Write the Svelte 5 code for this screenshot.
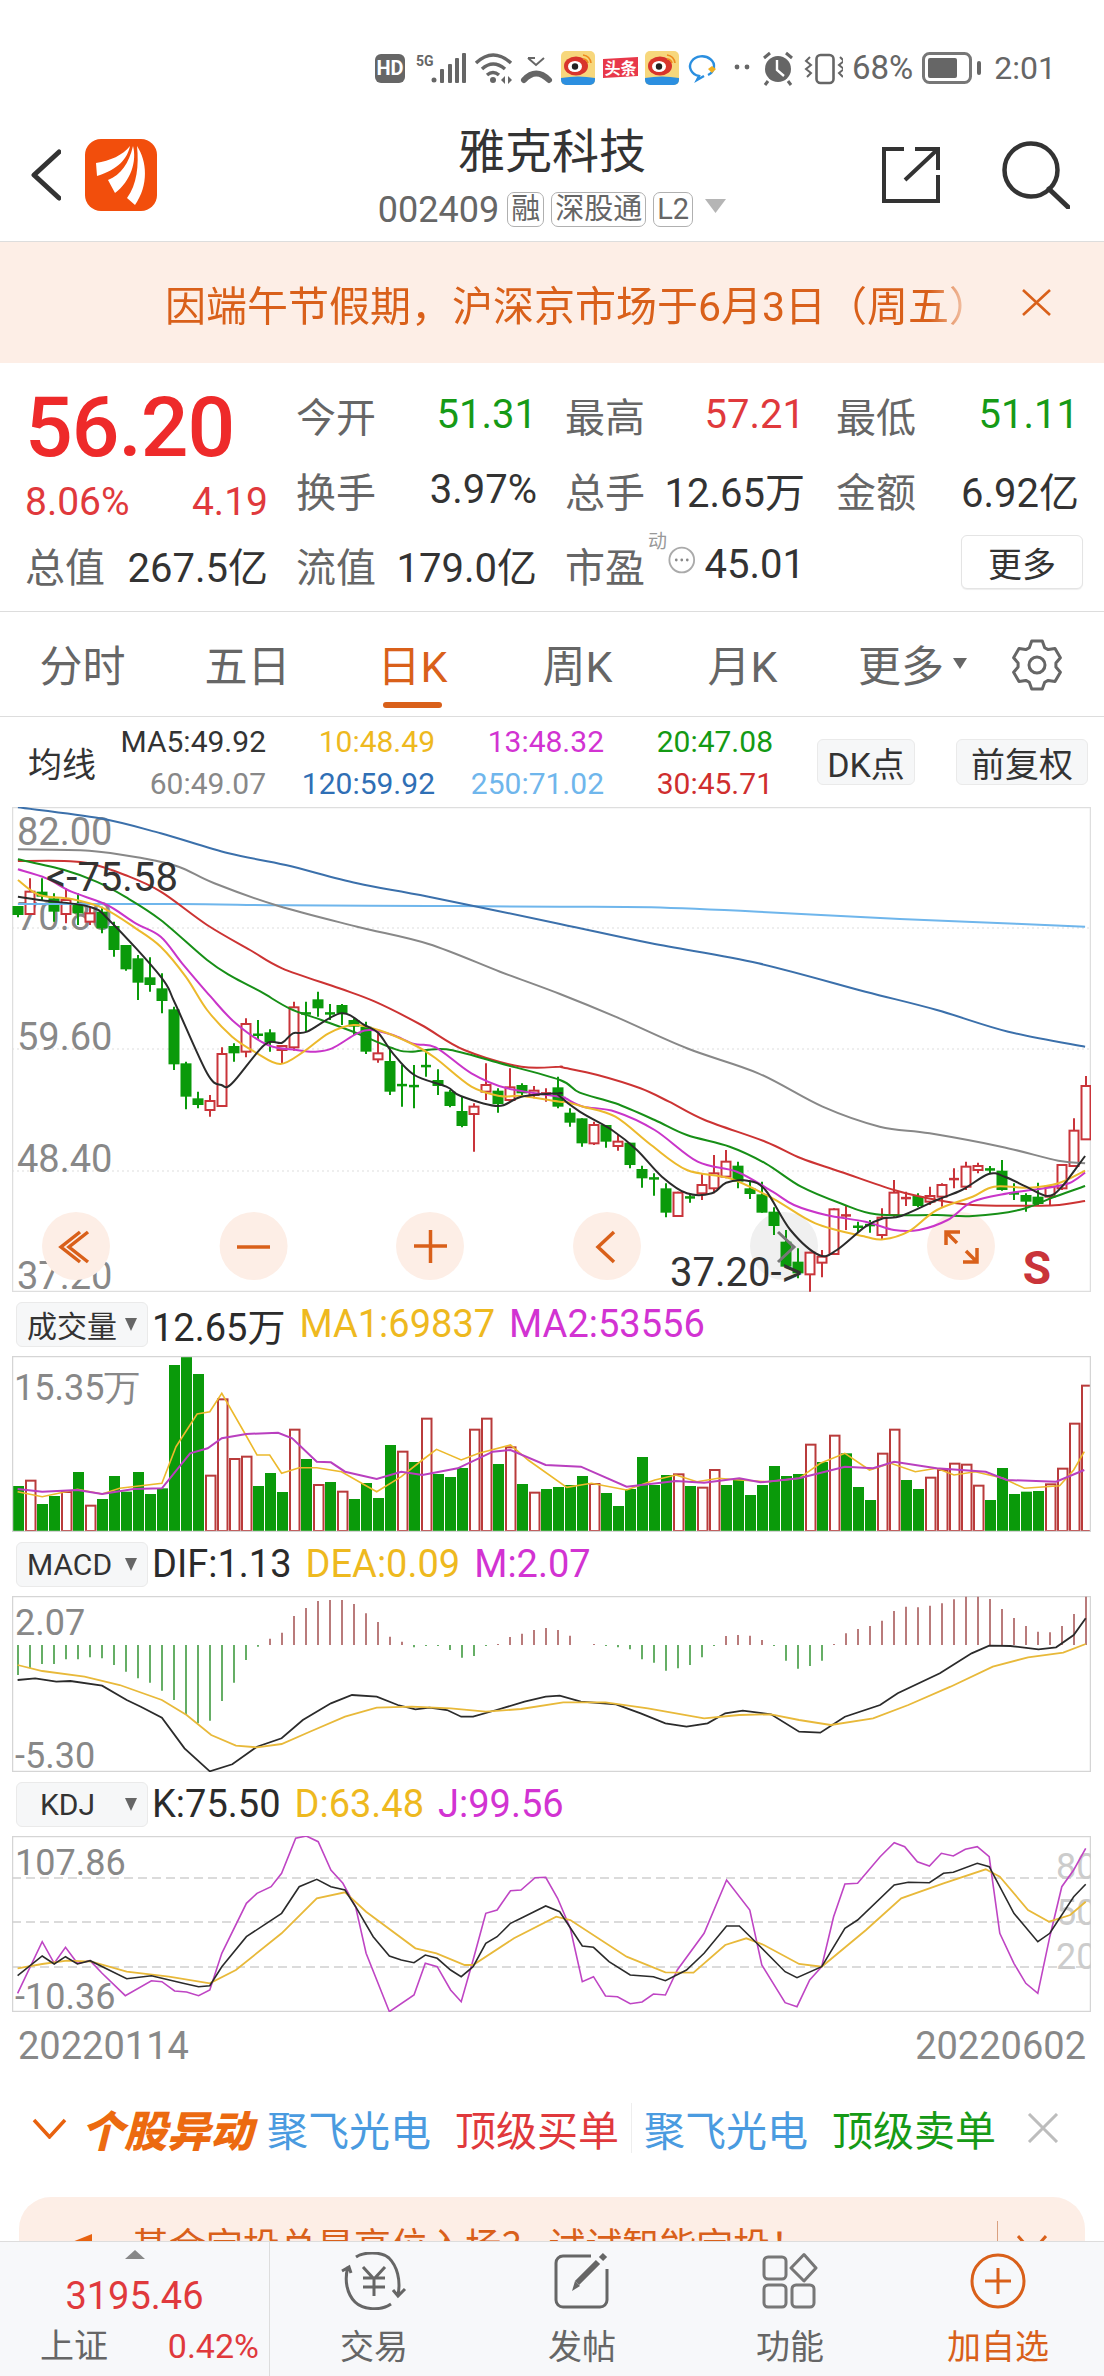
<script>
	// readings are in crop coordinates: candle data and MAs come from two 2.8x crops, the lower panes from 1.42x crops
	const RX = 1568 / 1104;
	const left = ([x, y]) => [x / 2.8, 800 + y / 3];
	const right = ([x, y]) => [544 + x / 2.8, 800 + y / 3];
	const main = (a, b) => [...a.map(left), ...b.map(right)];
	const pane = (top, a) => a.map(([x, y]) => [x / RX, top + y / 3]);

	const f = (n) => n.toFixed(1);
	const line = (p) => p.map(([x, y]) => `${f(x)},${f(y)}`).join(" ");
	const smooth = (p) => {
		let d = `M${f(p[0][0])} ${f(p[0][1])}`;
		for (let i = 0; i < p.length - 1; i++) {
			const a = p[i - 1] || p[i];
			const b = p[i];
			const c = p[i + 1];
			const e = p[i + 2] || c;
			d += ` C${f(b[0] + (c[0] - a[0]) / 6)} ${f(b[1] + (c[1] - a[1]) / 6)} ${f(c[0] - (e[0] - b[0]) / 6)} ${f(c[1] - (e[1] - b[1]) / 6)} ${f(c[0])} ${f(c[1])}`;
		}
		return d;
	};

	const gear = (() => {
		const pts = [];
		for (let i = 0; i < 6; i++) {
			const a = (i * Math.PI) / 3 - Math.PI / 2;
			for (const [r, o] of [[19, -0.42], [24.5, -0.22], [24.5, 0.22], [19, 0.42]]) {
				pts.push(`${f(26 + r * Math.cos(a + o))},${f(26 + r * Math.sin(a + o))}`);
			}
		}
		return pts.join(" ");
	})();

	// bodyTop, bodyBottom, high, low, up
	const candles = [
		[318, 345, 318, 352, 0], [275, 342, 235, 345, 1], [275, 290, 235, 300, 0], [295, 335, 280, 365, 0],
		[300, 342, 265, 370, 1], [315, 340, 280, 375, 0], [340, 365, 320, 375, 1], [335, 385, 320, 400, 0],
		[378, 450, 365, 470, 0], [435, 508, 435, 512, 0], [475, 548, 465, 600, 0], [532, 555, 472, 575, 0],
		[565, 603, 520, 640, 0], [628, 793, 620, 810, 0], [790, 890, 785, 928, 0], [895, 915, 875, 925, 0],
		[903, 930, 885, 950, 1], [762, 918, 742, 918, 1], [738, 760, 730, 785, 0], [672, 755, 655, 772, 1],
		[702, 706, 660, 720, 0], [697, 728, 688, 755, 0], [738, 750, 735, 790, 1], [622, 742, 605, 752, 1],
		[638, 642, 605, 695, 0], [598, 625, 575, 650, 0], [638, 642, 612, 660, 0], [615, 640, 612, 675, 0],
		[660, 680, 655, 705, 0], [680, 755, 665, 762, 0], [760, 778, 700, 788, 1], [783, 875, 745, 885, 0],
		[853, 857, 795, 920, 0], [856, 860, 795, 925, 0], [796, 800, 755, 830, 0], [840, 858, 808, 885, 0],
		[875, 918, 870, 922, 0], [933, 978, 890, 982, 0], [920, 942, 910, 1055, 1], [855, 875, 790, 900, 1],
		[872, 912, 865, 938, 0], [862, 900, 805, 905, 1], [855, 880, 850, 885, 0], [872, 885, 858, 895, 1],
		[878, 882, 865, 905, 1], [862, 920, 830, 925, 0], [938, 968, 925, 980, 0], [955, 1030, 955, 1040, 0],
		[975, 1030, 965, 1035, 1], [975, 1025, 975, 1043, 0], [1025, 1038, 1005, 1052, 1], [1028, 1095, 1028, 1105, 0],
		[1107, 1135, 1097, 1163, 0], [1133, 1137, 1120, 1187, 0], [1165, 1238, 1150, 1252, 0], [1178, 1248, 1175, 1250, 1],
		[1190, 1194, 1180, 1208, 0], [1155, 1180, 1120, 1200, 1], [1120, 1165, 1065, 1180, 1], [1085, 1130, 1050, 1135, 1],
		[1097, 1145, 1085, 1165, 0], [1165, 1182, 1145, 1197, 0], [1183, 1238, 1145, 1238, 0], [1235, 1278, 1222, 1305, 0],
		[1325, 1400, 1290, 1400, 0], [1385, 1420, 1345, 1435, 0], [1358, 1423, 1355, 1475, 1], [1370, 1388, 1350, 1432, 1],
		[1228, 1362, 1225, 1365, 1], [1244, 1250, 1215, 1290, 1], [1278, 1282, 1265, 1298, 0], [1273, 1277, 1260, 1298, 0],
		[1253, 1305, 1225, 1320, 1], [1178, 1245, 1140, 1250, 1], [1192, 1198, 1175, 1218, 1], [1188, 1218, 1180, 1222, 0],
		[1188, 1205, 1160, 1215, 1], [1155, 1190, 1150, 1220, 1], [1135, 1141, 1105, 1165, 1], [1100, 1160, 1085, 1170, 1],
		[1098, 1110, 1088, 1120, 1], [1106, 1110, 1098, 1122, 0], [1112, 1170, 1080, 1172, 0], [1178, 1182, 1150, 1200, 0],
		[1185, 1205, 1180, 1235, 0], [1190, 1212, 1148, 1215, 0], [1160, 1190, 1155, 1215, 1], [1095, 1165, 1095, 1170, 1],
		[992, 1098, 955, 1100, 1], [858, 1018, 828, 1020, 1],
	];

	const maLines = [
		{ c: "#6fb6ec", p: main([[50, 312], [500, 312], [800, 316], [1200, 318], [1568, 320]], [[300, 322], [600, 335], [900, 352], [1200, 366], [1515, 380]]) },
		{ c: "#3b70ab", p: main([[50, 22], [280, 55], [450, 100], [640, 160], [800, 195], [1000, 250], [1200, 290], [1568, 372]], [[300, 430], [600, 490], [900, 575], [1100, 630], [1300, 695], [1515, 740]]) },
		{ c: "#888888", p: main([[50, 148], [250, 152], [400, 175], [500, 200], [600, 250], [780, 318], [1000, 380], [1200, 432], [1400, 515], [1568, 582]], [[200, 650], [400, 745], [600, 820], [780, 920], [940, 980], [1080, 1000], [1280, 1040], [1440, 1082], [1515, 1090]]) },
		{ c: "#cc3333", p: main([[50, 183], [180, 183], [250, 190], [350, 225], [450, 275], [580, 375], [700, 450], [790, 505], [950, 565], [1050, 605], [1180, 675], [1300, 750], [1460, 800], [1568, 800]], [[50, 802], [150, 825], [270, 865], [350, 905], [450, 960], [620, 1025], [720, 1075], [830, 1115], [980, 1170], [1100, 1200], [1200, 1215], [1330, 1217], [1430, 1216], [1515, 1203]]) },
		{ c: "#178f17", p: main([[50, 178], [180, 210], [270, 245], [350, 290], [450, 360], [580, 480], [650, 530], [730, 575], [810, 625], [900, 660], [1000, 700], [1100, 745], [1150, 755], [1250, 748], [1400, 790], [1568, 840]], [[100, 878], [200, 910], [310, 960], [400, 1005], [520, 1040], [620, 1090], [720, 1160], [830, 1210], [930, 1243], [1100, 1245], [1200, 1248], [1330, 1230], [1430, 1190], [1515, 1158]]) },
		{ c: "#c935c9", p: main([[50, 208], [130, 235], [200, 275], [300, 315], [380, 370], [450, 410], [510, 490], [590, 590], [660, 670], [750, 735], [830, 750], [880, 755], [930, 745], [1000, 700], [1040, 690], [1100, 705], [1160, 732], [1220, 742], [1320, 820], [1420, 865], [1568, 890]], [[60, 895], [110, 920], [200, 935], [310, 990], [430, 1085], [540, 1115], [640, 1175], [700, 1215], [790, 1245], [900, 1265], [980, 1290], [1050, 1290], [1130, 1260], [1200, 1205], [1300, 1180], [1400, 1165], [1470, 1150], [1515, 1118]]) },
		{ c: "#ecb92c", p: main([[50, 240], [110, 285], [200, 297], [290, 325], [380, 385], [450, 440], [520, 530], [580, 630], [650, 710], [720, 760], [785, 792], [850, 755], [920, 700], [990, 675], [1060, 690], [1160, 735], [1220, 775], [1320, 860], [1400, 888], [1460, 888], [1568, 905]], [[60, 905], [110, 920], [200, 950], [300, 1035], [400, 1110], [520, 1135], [640, 1195], [760, 1270], [900, 1310], [950, 1318], [1020, 1295], [1100, 1230], [1200, 1190], [1260, 1160], [1360, 1163], [1440, 1150], [1515, 1112]]) },
		{ c: "#2b2b2b", p: main([[50, 290], [110, 300], [250, 320], [310, 365], [450, 530], [490, 610], [580, 820], [620, 855], [650, 850], [740, 735], [790, 728], [820, 700], [860, 695], [955, 640], [1020, 675], [1060, 700], [1100, 760], [1160, 825], [1250, 860], [1290, 888], [1395, 918], [1460, 890], [1568, 880]], [[40, 885], [100, 935], [190, 990], [260, 1050], [330, 1130], [400, 1180], [470, 1180], [510, 1148], [570, 1142], [620, 1170], [690, 1290], [770, 1365], [820, 1350], [900, 1280], [950, 1255], [1000, 1248], [1100, 1200], [1170, 1170], [1245, 1122], [1290, 1130], [1350, 1160], [1410, 1188], [1450, 1160], [1515, 1068]]) },
	];

	const axis = [[832, "82.00"], [917, "70.80"], [1037, "59.60"], [1159, "48.40"], [1276, "37.20"]];
	const knobs = [76, 253.6, 430, 607, 961];

	// top of each volume bar, in crop y
	const volTops = [588, 572, 642, 618, 606, 546, 647, 627, 558, 605, 546, 612, 595, 225, 198, 252, 557, 328, 507, 500, 588, 549, 606, 419, 507, 585, 576, 605, 627, 579, 624, 465, 485, 516, 386, 552, 561, 534, 419, 386, 522, 472, 582, 608, 597, 591, 585, 558, 582, 609, 648, 597, 501, 585, 555, 553, 588, 593, 540, 585, 567, 615, 585, 528, 558, 552, 464, 516, 437, 490, 591, 630, 491, 419, 570, 597, 563, 540, 521, 524, 587, 630, 534, 612, 605, 603, 583, 536, 401, 287];
	const volRed = new Set([1, 4, 6, 16, 17, 18, 19, 23, 25, 27, 32, 34, 38, 39, 41, 43, 48, 55, 57, 58, 66, 68, 72, 73, 76, 77, 78, 79, 80, 86, 87, 88, 89]);
	const volMa1 = pane(1290, [[25, 605], [60, 620], [110, 598], [145, 612], [170, 595], [230, 580], [250, 470], [280, 372], [298, 365], [315, 310], [345, 420], [365, 495], [383, 495], [400, 550], [425, 533], [450, 533], [485, 545], [535, 605], [570, 560], [600, 510], [620, 478], [655, 510], [680, 490], [725, 465], [750, 510], [805, 592], [840, 580], [890, 600], [930, 570], [960, 555], [990, 575], [1020, 565], [1050, 570], [1090, 575], [1135, 565], [1165, 520], [1200, 490], [1235, 540], [1265, 520], [1300, 545], [1330, 535], [1355, 555], [1385, 545], [1425, 565], [1455, 595], [1505, 587], [1525, 540], [1540, 485]]);
	const volMa2 = pane(1290, [[25, 597], [60, 605], [110, 600], [145, 612], [190, 597], [230, 595], [270, 490], [295, 475], [315, 445], [350, 432], [395, 428], [415, 445], [450, 515], [470, 517], [490, 545], [535, 567], [570, 545], [600, 555], [650, 535], [700, 485], [725, 480], [775, 525], [825, 530], [890, 590], [960, 573], [1000, 578], [1050, 565], [1080, 577], [1135, 565], [1200, 530], [1240, 535], [1270, 515], [1330, 535], [1400, 545], [1430, 570], [1500, 575], [1540, 540]]);

	// end of each MACD bar, zero line sits at 315
	const macdEnds = [405, 385, 372, 372, 358, 358, 352, 355, 375, 395, 415, 428, 452, 480, 525, 550, 542, 483, 428, 360, 320, 296, 278, 228, 204, 183, 180, 180, 192, 220, 246, 290, 305, 322, 318, 318, 330, 353, 348, 318, 312, 291, 281, 270, 264, 270, 287, 315, 312, 318, 322, 328, 358, 368, 392, 385, 375, 352, 318, 288, 285, 287, 300, 318, 362, 386, 378, 362, 312, 280, 267, 258, 242, 213, 200, 202, 197, 190, 178, 170, 170, 177, 207, 234, 258, 275, 277, 258, 222, 170];
	const dif = pane(1540, [[25, 420], [50, 415], [80, 425], [100, 423], [145, 437], [180, 480], [200, 500], [230, 533], [262, 625], [298, 694], [330, 673], [365, 620], [400, 595], [430, 540], [470, 490], [500, 465], [535, 470], [565, 495], [590, 508], [610, 503], [635, 510], [655, 530], [672, 530], [705, 510], [745, 485], [775, 470], [795, 467], [825, 485], [875, 493], [910, 520], [945, 550], [975, 560], [1005, 550], [1030, 520], [1055, 512], [1095, 523], [1135, 575], [1165, 578], [1200, 530], [1250, 495], [1275, 460], [1335, 400], [1380, 340], [1405, 317], [1435, 318], [1475, 328], [1500, 322], [1525, 285], [1542, 235]]);
	const dea = pane(1540, [[25, 375], [60, 393], [120, 410], [170, 435], [230, 480], [265, 525], [300, 585], [335, 617], [365, 622], [400, 612], [440, 575], [490, 530], [535, 503], [585, 500], [640, 505], [690, 515], [740, 507], [800, 487], [860, 487], [920, 505], [1000, 535], [1050, 525], [1095, 523], [1135, 540], [1180, 555], [1240, 535], [1290, 495], [1350, 440], [1410, 380], [1460, 352], [1510, 338], [1542, 312]]);

	const kdjJ = pane(1540, [[25, 1360], [60, 1205], [77, 1270], [93, 1222], [110, 1270], [128, 1262], [145, 1300], [178, 1367], [215, 1322], [230, 1325], [248, 1353], [265, 1356], [282, 1367], [298, 1350], [315, 1240], [350, 1090], [365, 1060], [385, 1040], [400, 1000], [420, 895], [435, 888], [452, 905], [470, 990], [487, 1030], [505, 1100], [520, 1240], [553, 1415], [588, 1365], [604, 1270], [621, 1280], [640, 1350], [655, 1385], [672, 1260], [690, 1120], [706, 1110], [725, 1052], [740, 1050], [760, 1013], [775, 1012], [792, 1075], [810, 1165], [827, 1325], [843, 1310], [860, 1368], [877, 1370], [895, 1391], [912, 1386], [928, 1362], [945, 1365], [962, 1290], [1000, 1180], [1032, 1020], [1065, 1110], [1082, 1275], [1115, 1388], [1132, 1400], [1150, 1320], [1167, 1280], [1184, 1130], [1200, 1032], [1218, 1030], [1250, 950], [1270, 908], [1285, 920], [1303, 965], [1320, 978], [1337, 940], [1354, 948], [1371, 928], [1388, 920], [1405, 950], [1420, 1180], [1440, 1270], [1457, 1330], [1474, 1360], [1491, 1190], [1508, 1040], [1525, 990], [1542, 925]]);
	const kdjK = pane(1540, [[25, 1307], [60, 1248], [77, 1272], [93, 1250], [110, 1272], [128, 1262], [180, 1316], [215, 1307], [260, 1330], [282, 1340], [298, 1337], [315, 1280], [350, 1190], [400, 1120], [425, 1040], [450, 1018], [470, 1040], [490, 1050], [505, 1100], [530, 1190], [553, 1248], [570, 1260], [588, 1268], [604, 1245], [621, 1255], [640, 1290], [655, 1310], [672, 1280], [690, 1210], [706, 1190], [725, 1150], [740, 1135], [775, 1098], [795, 1115], [827, 1218], [843, 1222], [865, 1265], [895, 1305], [928, 1310], [945, 1322], [975, 1290], [1000, 1240], [1032, 1158], [1050, 1158], [1075, 1210], [1115, 1295], [1132, 1313], [1167, 1280], [1200, 1165], [1218, 1140], [1270, 1035], [1290, 1027], [1320, 1028], [1340, 1000], [1354, 997], [1388, 970], [1405, 980], [1440, 1120], [1474, 1205], [1491, 1180], [1525, 1070], [1542, 1033]]);
	const kdjD = pane(1540, [[25, 1285], [60, 1272], [95, 1262], [130, 1265], [180, 1295], [240, 1310], [298, 1330], [335, 1290], [400, 1180], [450, 1075], [490, 1057], [520, 1115], [590, 1225], [620, 1240], [660, 1275], [672, 1275], [730, 1195], [790, 1130], [810, 1140], [890, 1250], [945, 1297], [985, 1298], [1030, 1215], [1060, 1195], [1085, 1215], [1135, 1272], [1167, 1280], [1230, 1170], [1280, 1075], [1340, 1030], [1400, 988], [1420, 1010], [1460, 1110], [1490, 1145], [1520, 1125], [1542, 1085]]);

	const tabs = ["分时", "五日", "日K", "周K", "月K"];
	const maRows = [
		["MA5:49.92", "#333", "10:48.49", "#eeb91f", "13:48.32", "#d233d2", "20:47.08", "#149a14"],
		["60:49.07", "#888", "120:59.92", "#2f6fb5", "250:71.02", "#6fb6ec", "30:45.71", "#cf2e2e"],
	];
</script>

<div class="page">
	<div class="status">
		<svg class="status-icons" width="468" height="40" viewBox="376 47 468 40">
			<rect x="376" y="53" width="30" height="29" rx="6" fill="#666" />
			<text x="391" y="74" class="hd">HD</text>
			<text x="417" y="65" class="fiveg">5G</text>
			<circle cx="435" cy="79" r="2.5" fill="#666" />
			<g fill="#666">
				<rect x="441" y="68" width="4" height="14" rx="1" />
				<rect x="449" y="63" width="4" height="19" rx="1" />
				<rect x="456" y="57" width="4" height="25" rx="1" />
				<rect x="463" y="52" width="4" height="30" rx="1" />
			</g>
			<g fill="none" stroke="#666" stroke-width="3.5">
				<path d="M477 62 Q494 46 512 62" />
				<path d="M483 68 Q494 58 506 68" />
				<path d="M488 74 Q494 69 500 74" />
			</g>
			<circle cx="494" cy="79" r="3" fill="#666" />
			<path d="M506 75 l-4 4 4 4z M509 75 l4 4 -4 4z" fill="#666" />
			<path d="M525 79 Q537 66 550 79" fill="none" stroke="#666" stroke-width="6" stroke-linecap="round" />
			<path d="M529 57 L537 64 L545 57 M529 57 H536" fill="none" stroke="#666" stroke-width="2" />
			{#each [562, 646] as x}
				<g transform="translate({x} 50)">
					<rect width="34" height="34" rx="5" fill="#f7d77c" />
					<ellipse cx="15" cy="15" rx="12" ry="9.5" fill="#d8342c" />
					<ellipse cx="14" cy="15.5" rx="7" ry="5.5" fill="#fff" />
					<circle cx="14" cy="15.5" r="3.2" fill="#222" />
					<path d="M22 4 Q29 5 30 12 M22 8 Q26 8 27 12" fill="none" stroke="#ee8a1e" stroke-width="1.6" />
					<path d="M0 27 Q17 24 34 27 V29 a5 5 0 0 1 -5 5 H5 a5 5 0 0 1 -5 -5z" fill="#2c8fe0" />
				</g>
			{/each}
			<path d="M604 58 L639 56 V75 L604 77z" fill="#e8384a" />
			<text x="621.5" y="73" class="toutiao">头条</text>
			<path d="M709 74 A12 10 0 1 0 700 75 L698 79 L705 75" fill="none" stroke="#2a8fe0" stroke-width="2.4" />
			<path d="M709 68 l4 -3 4 3 -4 4z" fill="#f0b020" />
			<circle cx="738" cy="66" r="2.4" fill="#666" />
			<circle cx="748" cy="66" r="2.4" fill="#666" />
			<circle cx="779" cy="68" r="13" fill="#666" />
			<path d="M778 59 V69 L785 75" fill="none" stroke="#fff" stroke-width="2.4" />
			<path d="M765 57 L771 52 M793 57 L787 52 M769 80 L766 84 M789 80 L792 84" stroke="#666" stroke-width="3" />
			<rect x="817.5" y="54" width="17" height="28" rx="4" fill="none" stroke="#666" stroke-width="2.6" />
			<path d="M811 56 l-4 4 5 4 -5 4 5 4 -4 4 M841 56 l4 4 -5 4 5 4 -5 4 4 4" fill="none" stroke="#666" stroke-width="2" />
		</svg>
		<span class="status-text">68%</span>
		<svg class="battery" width="60" height="32" viewBox="0 0 60 32">
			<rect x="1.5" y="1.5" width="47" height="29" rx="6" fill="none" stroke="#777" stroke-width="3" />
			<rect x="6" y="6" width="29" height="20" rx="2" fill="#666" />
			<rect x="55" y="9" width="4" height="14" rx="2" fill="#666" />
		</svg>
		<span class="status-text clock">2:01</span>
	</div>

	<nav class="nav">
		<div class="nav-left">
			<svg width="30" height="52" viewBox="0 0 30 52">
				<path d="M28 3 L3 26 L28 49" fill="none" stroke="#333" stroke-width="5" stroke-linecap="round" stroke-linejoin="round" />
			</svg>
			<svg width="72" height="72" viewBox="0 0 72 72">
				<rect width="72" height="72" rx="16" fill="#f24e0c" />
				<path d="M11 24 C25 22 38 16 45 7 C42 20 34 30 12 37Z" fill="#fff" />
				<path d="M23 41 C36 36 44 24 48 7 C52 22 46 42 30 54Z" fill="#fff" />
				<path d="M42 59 C52 46 54 26 52 7 C62 22 64 46 50 66Z" fill="#fff" />
			</svg>
		</div>
		<div class="nav-center">
			<div class="title">雅克科技</div>
			<div class="sub">
				<span class="code">002409</span>
				<span class="tag">融</span>
				<span class="tag">深股通</span>
				<span class="tag">L2</span>
				<svg width="21" height="14" viewBox="0 0 21 14"><path d="M0 0 H21 L10.5 14Z" fill="#b5b5b5" /></svg>
			</div>
		</div>
		<div class="nav-right">
			<svg width="58" height="56" viewBox="0 0 58 56">
				<path d="M22 2 H2 V54 H56 V28 M23 33 L56 2 M33 2 H56 V23" fill="none" stroke="#333" stroke-width="4" />
			</svg>
			<svg width="68" height="68" viewBox="0 0 68 68">
				<circle cx="29" cy="29" r="26.5" fill="none" stroke="#333" stroke-width="4.5" />
				<path d="M47 48 L66 66" stroke="#333" stroke-width="5" stroke-linecap="round" />
			</svg>
		</div>
	</nav>

	<div class="banner">
		<div class="banner-text">因端午节假期，沪深京市场于6月3日（周五）休市</div>
		<svg width="29" height="27" viewBox="0 0 29 27"><path d="M1 1 L28 26 M28 1 L1 26" stroke="#d9601a" stroke-width="2.6" /></svg>
	</div>

	<section class="stats">
		<div class="price-block">
			<div class="price">56.20</div>
			<div class="price-sub"><span>8.06%</span><span>4.19</span></div>
		</div>
		<div class="stat"><span class="label">今开</span><span class="green">51.31</span></div>
		<div class="stat c3"><span class="label">最高</span><span class="red">57.21</span></div>
		<div class="stat"><span class="label">最低</span><span class="green">51.11</span></div>
		<div class="stat"><span class="label">换手</span><span>3.97%</span></div>
		<div class="stat c3"><span class="label">总手</span><span>12.65万</span></div>
		<div class="stat"><span class="label">金额</span><span>6.92亿</span></div>
		<div class="stat"><span class="label">总值</span><span>267.5亿</span></div>
		<div class="stat"><span class="label">流值</span><span>179.0亿</span></div>
		<div class="stat c3 pe">
			<span class="label">市盈</span>
			<span class="dyn">动</span>
			<svg width="30" height="30" viewBox="0 0 30 30">
				<circle cx="15" cy="15" r="13.5" fill="none" stroke="#aaa" stroke-width="2" />
				<circle cx="9" cy="15" r="1.5" fill="#888" /><circle cx="15" cy="15" r="1.5" fill="#888" /><circle cx="21" cy="15" r="1.5" fill="#888" />
			</svg>
			<span class="pe-value">45.01</span>
		</div>
		<div class="stat more-cell"><button class="more">更多</button></div>
	</section>

	<div class="tabs">
		{#each tabs as t, i}
			<div class="tab" class:active={i === 2}>
				<span>{t}</span>
				{#if i === 2}<div class="underline"></div>{/if}
			</div>
		{/each}
		<div class="tab tab-more">
			<span>更多</span>
			<svg width="14" height="11" viewBox="0 0 14 11"><path d="M0 0 H14 L7 11Z" fill="#666" /></svg>
		</div>
		<div class="tab-gear">
			<svg width="52" height="52" viewBox="0 0 52 52">
				<polygon points={gear} fill="none" stroke="#666" stroke-width="3" stroke-linejoin="round" />
				<circle cx="26" cy="26" r="8" fill="none" stroke="#666" stroke-width="3" />
			</svg>
		</div>
	</div>

	<div class="ma-row">
		<div class="ma-title">均线</div>
		<div class="ma-grid">
			{#each maRows as row}
				{#each [0, 2, 4, 6] as k}
					<span style="color: {row[k + 1]}">{row[k]}</span>
				{/each}
			{/each}
		</div>
		<div class="chip chip-dk">DK点</div>
		<div class="chip chip-fq">前复权</div>
	</div>

	<svg class="chart" width="1079" height="485" viewBox="12 807 1079 485">
		<rect x="12.5" y="807.5" width="1078" height="484" fill="#fff" stroke="#dedede" stroke-width="1.5" />
		{#each [928, 1049, 1171] as y}
			<line x1="12" x2="1091" y1={y} y2={y} class="dots" />
		{/each}
		{#each axis as [y, t]}
			<text x="17" {y} class="axis">{t}</text>
		{/each}
		{#each knobs as x}
			<circle cx={x} cy="1246" r="34" fill="#fdeee6" />
		{/each}
		<circle cx="784" cy="1246" r="34" fill="#f0f0f0" />
		<g fill="none" stroke="#d9601a" stroke-width="3.5">
			<path d="M80 1232 L61 1247 L80 1262 M88 1232 L69 1247 L88 1262" />
			<path d="M237 1247 H270" />
			<path d="M414 1246 H447 M430.5 1230 V1263" />
			<path d="M614 1232 L598 1247 L614 1262" />
			<path d="M946 1245 V1232 H960 M946 1232 L957 1243 M977 1248 V1262 H963 M977 1262 L966 1251" />
		</g>
		{#each candles as [t, b, h, l, up], i}
			{@const x = 18 + 12 * i}
			{@const c = up ? "#c9343a" : "#0a9a0a"}
			<line x1={x} x2={x} y1={800 + h / 3} y2={800 + l / 3} stroke={c} stroke-width="2" />
			{#if b - t < 8}
				<rect x={x - 5} y={800 + t / 3 - 0.5} width="10" height="2.5" fill={c} />
			{:else if up}
				<rect x={x - 4.5} y={800 + t / 3} width="9" height={(b - t) / 3} fill="#fff" stroke={c} stroke-width="2" />
			{:else}
				<rect x={x - 5.5} y={800 + t / 3} width="11" height={(b - t) / 3} fill={c} />
			{/if}
		{/each}
		{#each maLines as m}
			<path d={smooth(m.p)} fill="none" stroke={m.c} stroke-width="2" />
		{/each}
		<path d="M778 1232 L794 1247 L778 1262" fill="none" stroke="#777" stroke-width="3" />
		<text x="46" y="877" class="mark">&lt;-75.58</text>
		<text x="670" y="1272" class="mark">37.20-&gt;</text>
		<text x="1037" y="1268" class="sell">S</text>
	</svg>

	<div class="head">
		<div class="picker"><span>成交量</span><i></i></div>
		<span class="dark">12.65万</span><span class="yellow">MA1:69837</span><span class="purple">MA2:53556</span>
	</div>
	<svg class="chart" width="1079" height="176" viewBox="12 1356 1079 176">
		{#each volTops as t, i}
			{@const y = 1290 + t / 3}
			{#if volRed.has(i)}
				<rect x={14 + 12 * i} {y} width="9.5" height={1531 - y} fill="#fff" stroke="#b93b3b" stroke-width="2" />
			{:else}
				<rect x={13 + 12 * i} {y} width="11" height={1532 - y} fill="#0a9a0a" />
			{/if}
		{/each}
		<polyline points={line(volMa1)} fill="none" stroke="#ecb92c" stroke-width="1.6" />
		<polyline points={line(volMa2)} fill="none" stroke="#b93fbf" stroke-width="2" />
		<rect x="12.5" y="1356.5" width="1078" height="175" fill="none" stroke="#d5d5d5" stroke-width="1.5" />
		<text x="14" y="1388" class="axis small">15.35万</text>
	</svg>

	<div class="head">
		<div class="picker"><span>MACD</span><i></i></div>
		<span class="dark">DIF:1.13</span><span class="yellow">DEA:0.09</span><span class="purple">M:2.07</span>
	</div>
	<svg class="chart" width="1079" height="176" viewBox="12 1596 1079 176">
		<rect x="12.5" y="1596.5" width="1078" height="175" fill="#fff" stroke="#d5d5d5" stroke-width="1.5" />
		<text x="15" y="1623" class="axis small">2.07</text>
		<text x="15" y="1756" class="axis small">-5.30</text>
		{#each macdEnds as e, i}
			<line x1={18 + 12 * i} x2={18 + 12 * i} y1={1540 + 315 / 3} y2={1540 + e / 3} stroke={e > 315 ? "#3f9a3f" : "#a85a5a"} stroke-width="1.6" />
		{/each}
		<polyline points={line(dif)} fill="none" stroke="#2b2b2b" stroke-width="1.8" />
		<polyline points={line(dea)} fill="none" stroke="#e8b93a" stroke-width="1.8" />
	</svg>

	<div class="head">
		<div class="picker"><span class="kdj">KDJ</span><i></i></div>
		<span class="dark">K:75.50</span><span class="yellow">D:63.48</span><span class="purple">J:99.56</span>
	</div>
	<svg class="chart" width="1079" height="176" viewBox="12 1836 1079 176">
		<rect x="12.5" y="1836.5" width="1078" height="175" fill="#fff" stroke="#d5d5d5" stroke-width="1.5" />
		{#each [1878, 1922, 1967] as y}
			<line x1="12" x2="1091" y1={y} y2={y} class="dashes" />
		{/each}
		<text x="15" y="1863" class="axis small">107.86</text>
		<text x="15" y="1997" class="axis small">-10.36</text>
		<text x="1056" y="1867" class="axis small pale">80</text>
		<text x="1056" y="1913" class="axis small pale">50</text>
		<text x="1056" y="1957" class="axis small pale">20</text>
		<polyline points={line(kdjJ)} fill="none" stroke="#bf45c4" stroke-width="1.6" />
		<polyline points={line(kdjD)} fill="none" stroke="#e8b93a" stroke-width="1.8" />
		<polyline points={line(kdjK)} fill="none" stroke="#2b2b2b" stroke-width="1.6" />
	</svg>

	<div class="dates"><span>20220114</span><span>20220602</span></div>

	<div class="body">
		<div class="movers">
			<svg width="35" height="21" viewBox="0 0 35 21"><path d="M2 2 L17.5 19 L33 2" fill="none" stroke="#e8620f" stroke-width="3.5" /></svg>
			<span class="movers-title">个股异动</span>
			<span class="mover blue">聚飞光电</span>
			<span class="mover red-text">顶级买单</span>
			<span class="mover-sep"></span>
			<span class="mover blue">聚飞光电</span>
			<span class="mover green-text">顶级卖单</span>
			<svg class="mover-x" width="32" height="30" viewBox="0 0 32 30"><path d="M2 1 L30 29 M30 1 L2 29" stroke="#bdbdbd" stroke-width="3" /></svg>
		</div>
		<div class="card">
			<svg width="45" height="40" viewBox="0 0 45 40">
				<rect x="0" y="17" width="6" height="23" fill="#e8620f" />
				<path d="M9 14 L44 0 V40 L9 30Z" fill="#e8620f" />
			</svg>
			<span class="card-text">基金定投总是高位入场？ 试试智能定投！</span>
			<span class="card-sep"></span>
			<svg width="30" height="18" viewBox="0 0 30 18"><path d="M1 1 L15 17 L29 1" fill="none" stroke="#d9601a" stroke-width="3" /></svg>
		</div>
	</div>

	<footer class="bottom">
		<div class="index">
			<svg width="20" height="9" viewBox="0 0 20 9"><path d="M10 0 L20 9 H0Z" fill="#888" /></svg>
			<div class="index-value">3195.46</div>
			<div class="index-row"><span class="index-name">上证</span><span>0.42%</span></div>
		</div>
		<div class="action">
			<svg width="66" height="58" viewBox="0 0 66 58" fill="none" stroke="#666" stroke-width="3">
				<path d="M15 5 C22 0 40 -1 48 6 C56 14 60 28 57 43 M64 37 L57 44 L52 38" />
				<path d="M50 52 C40 59 22 58 14 50 C6 42 3 28 7 15 M1 19 L8 15 L10 21" />
				<path d="M22 15 L33 27 L44 15 M22 26 H44 M22 35 H44 M33 27 V44" />
			</svg>
			<span>交易</span>
		</div>
		<div class="action">
			<svg width="56" height="56" viewBox="0 0 56 56" fill="none" stroke="#666" stroke-width="3">
				<path d="M37 3 H9 a7 7 0 0 0 -7 7 V47 a7 7 0 0 0 7 7 H46 a7 7 0 0 0 7 -7 V16" />
				<path d="M23 30 L44 9" stroke-width="6" />
				<path d="M18 38 L21 28 L26 33Z" fill="#666" stroke="none" />
				<path d="M47 6 L51 2" stroke-width="6" />
			</svg>
			<span>发帖</span>
		</div>
		<div class="action">
			<svg width="56" height="56" viewBox="0 0 56 56" fill="none" stroke="#777" stroke-width="3">
				<rect x="2" y="4" width="22" height="22" rx="4" />
				<path d="M42 1.5 L54 15 L42 28 L29 15Z" stroke-linejoin="round" />
				<rect x="2" y="32" width="22" height="22" rx="4" />
				<rect x="30" y="32" width="22" height="22" rx="4" />
			</svg>
			<span>功能</span>
		</div>
		<div class="action add">
			<svg width="56" height="56" viewBox="0 0 56 56" fill="none" stroke="#d9601a" stroke-width="3">
				<circle cx="28" cy="28" r="26" />
				<path d="M15 28 H41 M28 15 V41" />
			</svg>
			<span>加自选</span>
		</div>
	</footer>
</div>

<style>
	:global(body) {
		margin: 0;
		background: #fff;
	}

	.page {
		width: 1104px;
		height: 2376px;
		display: flex;
		flex-direction: column;
		overflow: hidden;
		background: #fff;
		color: #333;
		font-family: Roboto, "Noto Sans CJK SC", sans-serif;
	}

	.status {
		height: 90px;
		flex: none;
		box-sizing: border-box;
		padding: 45px 48px 0 0;
		display: flex;
		justify-content: flex-end;
		align-items: center;
		gap: 9px;
	}
	.status-text {
		font-size: 33px;
		color: #666;
		line-height: 40px;
	}
	.clock {
		margin-left: 3px;
		font-size: 32px;
	}
	.hd {
		font: 700 20px Roboto, sans-serif;
		fill: #fff;
		text-anchor: middle;
	}
	.fiveg {
		font: 700 14px Roboto, sans-serif;
		fill: #666;
	}
	.toutiao {
		font: 700 16px "Noto Sans CJK SC", sans-serif;
		fill: #fff;
		text-anchor: middle;
	}

	.nav {
		height: 152px;
		flex: none;
		box-sizing: border-box;
		border-bottom: 1.5px solid #ddd;
		padding-top: 18px;
		display: grid;
		grid-template-columns: 1fr auto 1fr;
		align-items: center;
	}
	.nav-left {
		display: flex;
		align-items: center;
		gap: 24px;
		padding-left: 31px;
	}
	.nav-right {
		display: flex;
		align-items: center;
		justify-content: flex-end;
		gap: 62px;
		padding-right: 34px;
	}
	.nav-center {
		display: flex;
		flex-direction: column;
		align-items: center;
		gap: 10px;
	}
	.title {
		font-size: 47px;
		line-height: 60px;
		color: #333;
	}
	.sub {
		display: flex;
		align-items: center;
		gap: 7px;
		height: 36px;
		color: #666;
	}
	.code {
		font-size: 36px;
		margin-right: 1px;
	}
	.tag {
		font-size: 29px;
		line-height: 33px;
		padding: 0 3px;
		border: 1.5px solid #b0b0b0;
		border-radius: 7px;
		color: #666;
	}
	.sub svg {
		margin: -8px 0 0 5px;
	}

	.banner {
		height: 121px;
		flex: none;
		background: #fdeee6;
		display: flex;
		align-items: center;
		padding-left: 165px;
		color: #d9601a;
	}
	.banner-text {
		width: 814px;
		overflow: hidden;
		white-space: nowrap;
		font-size: 41px;
		margin-right: 43px;
		mask-image: linear-gradient(to right, #000 94%, transparent);
	}

	.stats {
		height: 249px;
		flex: none;
		box-sizing: border-box;
		border-bottom: 1.5px solid #ddd;
		padding: 14px 0 0 25px;
		display: grid;
		grid-template-columns: 271px 269px 271px 271px;
		grid-auto-rows: 75px;
		font-size: 40px;
	}
	.price-block {
		grid-row: span 2;
		padding-top: 16px;
		padding-right: 28px;
		color: #ee2a2a;
	}
	.price {
		font-size: 84px;
		font-weight: 500;
		line-height: 70px;
		letter-spacing: -1px;
	}
	.price-sub {
		display: flex;
		justify-content: space-between;
		margin-top: 19px;
		line-height: 40px;
		font-size: 39px;
		color: #e0393c;
	}
	.stat {
		display: flex;
		justify-content: space-between;
		align-items: center;
		padding-right: 28px;
		color: #333;
		white-space: nowrap;
	}
	.stat.c3 {
		padding-right: 31px;
	}
	.label {
		color: #666;
	}
	.green {
		color: #169a16;
	}
	.red {
		color: #e0393c;
	}
	.pe {
		justify-content: flex-start;
	}
	.dyn {
		font-size: 19px;
		color: #999;
		align-self: flex-start;
		margin: 5px 1px 0 3px;
		line-height: 20px;
	}
	.pe svg {
		margin-top: -10px;
	}
	.pe-value {
		margin-left: 9px;
	}
	.more-cell {
		justify-content: flex-end;
		padding-right: 24px;
	}
	.more {
		width: 122px;
		height: 54px;
		margin-top: -5px;
		padding: 0;
		background: #fff;
		border: 1px solid #e4e4e4;
		border-radius: 6px;
		box-shadow: 0 1px 1px #eee;
		font: 34px "Noto Sans CJK SC", sans-serif;
		color: #333;
	}

	.tabs {
		height: 105px;
		flex: none;
		box-sizing: border-box;
		border-bottom: 1.5px solid #ddd;
		display: grid;
		grid-template-columns: repeat(6, 165px) 1fr;
		font-size: 43px;
		color: #666;
	}
	.tab {
		display: flex;
		flex-direction: column;
		align-items: center;
		padding-top: 25px;
		line-height: 60px;
	}
	.tab.active {
		color: #d9601a;
	}
	.underline {
		width: 59px;
		height: 6px;
		margin-top: 5px;
		border-radius: 3px;
		background: #d9601a;
	}
	.tab-more {
		flex-direction: row;
		align-items: flex-start;
		gap: 9px;
		padding-left: 33px;
	}
	.tab-more svg {
		margin-top: 21px;
	}
	.tab-gear {
		padding: 27px 0 0 21px;
	}

	.ma-row {
		height: 90px;
		flex: none;
		display: flex;
		align-items: center;
	}
	.ma-title {
		width: 69px;
		padding-left: 28px;
		font-size: 34px;
	}
	.ma-grid {
		display: grid;
		grid-template-columns: repeat(4, 169px);
		grid-auto-rows: 42px;
		align-items: center;
		text-align: right;
		font-size: 30px;
	}
	.chip {
		height: 46px;
		box-sizing: border-box;
		display: flex;
		align-items: center;
		justify-content: center;
		background: #f6f7f8;
		border: 1px solid #eaeaea;
		border-radius: 6px;
		font-size: 34px;
		color: #333;
	}
	.chip-dk {
		width: 98px;
		margin-left: 44px;
	}
	.chip-fq {
		width: 132px;
		margin-left: 41px;
	}

	.chart {
		display: block;
		flex: none;
		margin-left: 12px;
	}
	.dots {
		stroke: #ddd;
		stroke-width: 1;
		stroke-dasharray: 2 3;
	}
	.dashes {
		stroke: #cfcfcf;
		stroke-width: 1.5;
		stroke-dasharray: 9 5;
	}
	.axis {
		font: 38px Roboto, sans-serif;
		fill: #888;
		dominant-baseline: central;
	}
	.axis.small {
		font-size: 36px;
	}
	.axis.pale {
		fill: #ccc;
	}
	.mark {
		font: 40px Roboto, sans-serif;
		fill: #333;
		dominant-baseline: central;
	}
	.sell {
		font: 700 46px Roboto, sans-serif;
		fill: #c9343a;
		text-anchor: middle;
		dominant-baseline: central;
	}

	.head {
		height: 64px;
		flex: none;
		display: flex;
		align-items: center;
		padding-left: 16px;
		font-size: 38px;
	}
	.head > span {
		margin-right: 14px;
	}
	.picker {
		width: 132px;
		height: 45px;
		box-sizing: border-box;
		margin-right: 4px;
		padding: 0 10px 0 10px;
		display: flex;
		align-items: center;
		justify-content: space-between;
		background: #f6f7f8;
		border: 1px solid #eaeaea;
		border-radius: 6px;
		font-size: 30px;
		color: #333;
	}
	.picker i {
		width: 0;
		height: 0;
		border-left: 6.5px solid transparent;
		border-right: 6.5px solid transparent;
		border-top: 13px solid #666;
	}
	.kdj {
		margin-left: 13px;
	}
	.dark {
		color: #2b2b2b;
	}
	.yellow {
		color: #eeb91f;
	}
	.purple {
		color: #d233d2;
	}

	.dates {
		height: 68px;
		flex: none;
		box-sizing: border-box;
		padding: 0 18px;
		display: flex;
		align-items: center;
		justify-content: space-between;
		font-size: 38px;
		color: #888;
	}

	.body {
		flex: 1;
		min-height: 0;
		overflow: hidden;
	}
	.movers {
		height: 96px;
		display: flex;
		align-items: center;
		padding-left: 32px;
		white-space: nowrap;
	}
	.movers-title {
		margin: 0 14px 0 14px;
		width: 172px;
		font-size: 43px;
		font-weight: 900;
		font-style: italic;
		color: #ec6a10;
	}
	.mover {
		width: 164px;
		font-size: 41px;
		margin-right: 24px;
	}
	.blue {
		color: #4a9be0;
	}
	.red-text {
		color: #e0393c;
		margin-right: 12px;
	}
	.green-text {
		color: #169a16;
		margin-right: 31px;
	}
	.mover-sep {
		width: 1px;
		height: 50px;
		background: #eee;
		margin-right: 12px;
	}

	.card {
		height: 94px;
		margin: 21px 19px 0;
		padding: 0 38px 0 29px;
		display: flex;
		align-items: center;
		background: #fdeee6;
		border-radius: 32px 32px 0 0;
		color: #d9601a;
		white-space: nowrap;
	}
	.card svg:first-child {
		margin-top: 20px;
	}
	.card-text {
		margin-left: 39px;
		font-size: 37px;
	}
	.card-sep {
		width: 1px;
		height: 46px;
		margin: 0 19px 0 auto;
		background: #d9a080;
	}

	.bottom {
		height: 135px;
		flex: none;
		box-sizing: border-box;
		border-top: 1.5px solid #ddd;
		display: flex;
		background: #f7f8fa;
	}
	.index {
		width: 270px;
		flex: none;
		box-sizing: border-box;
		border-right: 1.5px solid #ddd;
		padding-top: 8px;
		display: flex;
		flex-direction: column;
		align-items: center;
		color: #e0393c;
	}
	.index svg {
		display: block;
	}
	.index-value {
		margin-top: 14px;
		font-size: 38px;
		line-height: 46px;
	}
	.index-row {
		width: 100%;
		box-sizing: border-box;
		margin-top: 4px;
		padding: 0 10px 0 40px;
		display: flex;
		justify-content: space-between;
		font-size: 34px;
		line-height: 46px;
	}
	.index-name {
		color: #666;
	}
	.action {
		width: 208px;
		padding-top: 10px;
		display: flex;
		flex-direction: column;
		align-items: center;
		font-size: 34px;
		line-height: 46px;
		color: #666;
	}
	.action svg {
		height: 58px;
		margin-bottom: 14px;
	}
	.action.add {
		color: #d9601a;
	}
</style>
